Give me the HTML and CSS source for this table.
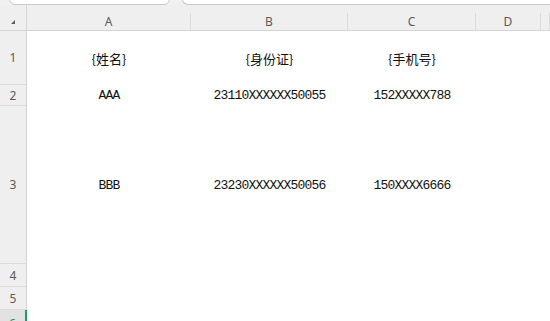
FILE: index.html
```html
<!DOCTYPE html>
<html>
<head>
<meta charset="utf-8">
<link rel="stylesheet" href="styles.css">
</head>
<body>
<div class="topbar">
  <div class="box box-name"></div>
  <div class="box box-formula"></div>
</div>
<div class="sheet">
  <div class="corner"><span class="tri"></span></div>
  <div class="colhead"><div class="hc">A</div></div>
  <div class="colhead"><div class="hc">B</div></div>
  <div class="colhead"><div class="hc">C</div></div>
  <div class="colhead"><div class="hc">D</div></div>
  <div class="colhead"><div class="hc"></div></div>

  <div class="rowhead r1">1</div>
  <div class="cell cjk">{姓名}</div>
  <div class="cell cjk">{身份证}</div>
  <div class="cell cjk">{手机号}</div>
  <div class="cell"></div>
  <div class="cell"></div>

  <div class="rowhead r2">2</div>
  <div class="cell mono">AAA</div>
  <div class="cell mono">23110XXXXXX50055</div>
  <div class="cell mono">152XXXXX788</div>
  <div class="cell"></div>
  <div class="cell"></div>

  <div class="rowhead r3">3</div>
  <div class="cell mono">BBB</div>
  <div class="cell mono">23230XXXXXX50056</div>
  <div class="cell mono">150XXXX6666</div>
  <div class="cell"></div>
  <div class="cell"></div>

  <div class="rowhead r4">4</div>
  <div class="cell"></div><div class="cell"></div><div class="cell"></div><div class="cell"></div><div class="cell"></div>

  <div class="rowhead r5">5</div>
  <div class="cell"></div><div class="cell"></div><div class="cell"></div><div class="cell"></div><div class="cell"></div>

  <div class="rowhead r6 sel">6</div>
  <div class="cell"></div><div class="cell"></div><div class="cell"></div><div class="cell"></div><div class="cell"></div>
</div>
</body>
</html>
```

FILE: styles.css
```css
html, body {
  margin: 0;
  padding: 0;
  background: #ffffff;
  overflow: hidden;
  width: 550px;
  height: 321px;
}

.topbar {
  height: 5px;
  display: flex;
  align-items: flex-end;
  overflow: hidden;
  background: #f1f1f1;
  padding-left: 9px;
  gap: 12px;
}

.box {
  height: 24px;
  flex: none;
  background: #ffffff;
  border: 1px solid #c9c9c9;
  border-radius: 0 0 6px 6px;
  box-sizing: border-box;
}

.box-name { width: 161px; }
.box-formula { flex: 1; border-right: none; border-radius: 0 0 0 6px; }

.sheet {
  display: grid;
  grid-template-columns: 27px 164px 157px 128px 65px 1fr;
  grid-template-rows: 26px 54px 21px 158px 23px 23px 24px;
  font-family: "Liberation Sans", Arial, sans-serif;
}

.corner {
  background: #efefef;
  border-bottom: 1px solid #d4d4d4;
  border-right: 1px solid #d4d4d4;
  box-sizing: border-box;
  position: relative;
}

.tri {
  position: absolute;
  left: 11px;
  top: 15px;
  width: 0;
  height: 0;
  border-left: 4px solid transparent;
  border-bottom: 4px solid #5c5c5c;
}

.colhead {
  background: #efefef;
  border-bottom: 1px solid #d4d4d4;
  box-sizing: border-box;
  padding-top: 8px;
}

.hc {
  height: 17px;
  line-height: 17px;
  border-right: 1px solid #dcdcdc;
  text-align: center;
  font-size: 12px;
  color: #5a5a5a;
  font-family: "Noto Sans", "Liberation Sans", sans-serif;
}

.rowhead {
  background: #efefef;
  border-right: 1px solid #d4d4d4;
  border-bottom: 1px solid #dadada;
  box-sizing: border-box;
  display: flex;
  align-items: center;
  justify-content: center;
  font-size: 12px;
  color: #5a5a5a;
  font-family: "Noto Sans", "Liberation Sans", sans-serif;
}

.rowhead.sel {
  background: #e2e2e2;
  border-right: 2px solid #1f9a62;
  color: #1f9a62;
  align-items: flex-start;
  padding-top: 5px;
}

.cell {
  display: flex;
  align-items: center;
  justify-content: center;
  color: #111111;
  white-space: nowrap;
}

.cjk {
  font-family: "Noto Sans CJK SC", sans-serif;
  font-size: 13px;
}

.mono {
  font-family: "Liberation Mono", monospace;
  font-size: 13px;
  letter-spacing: -0.8px;
}
```
